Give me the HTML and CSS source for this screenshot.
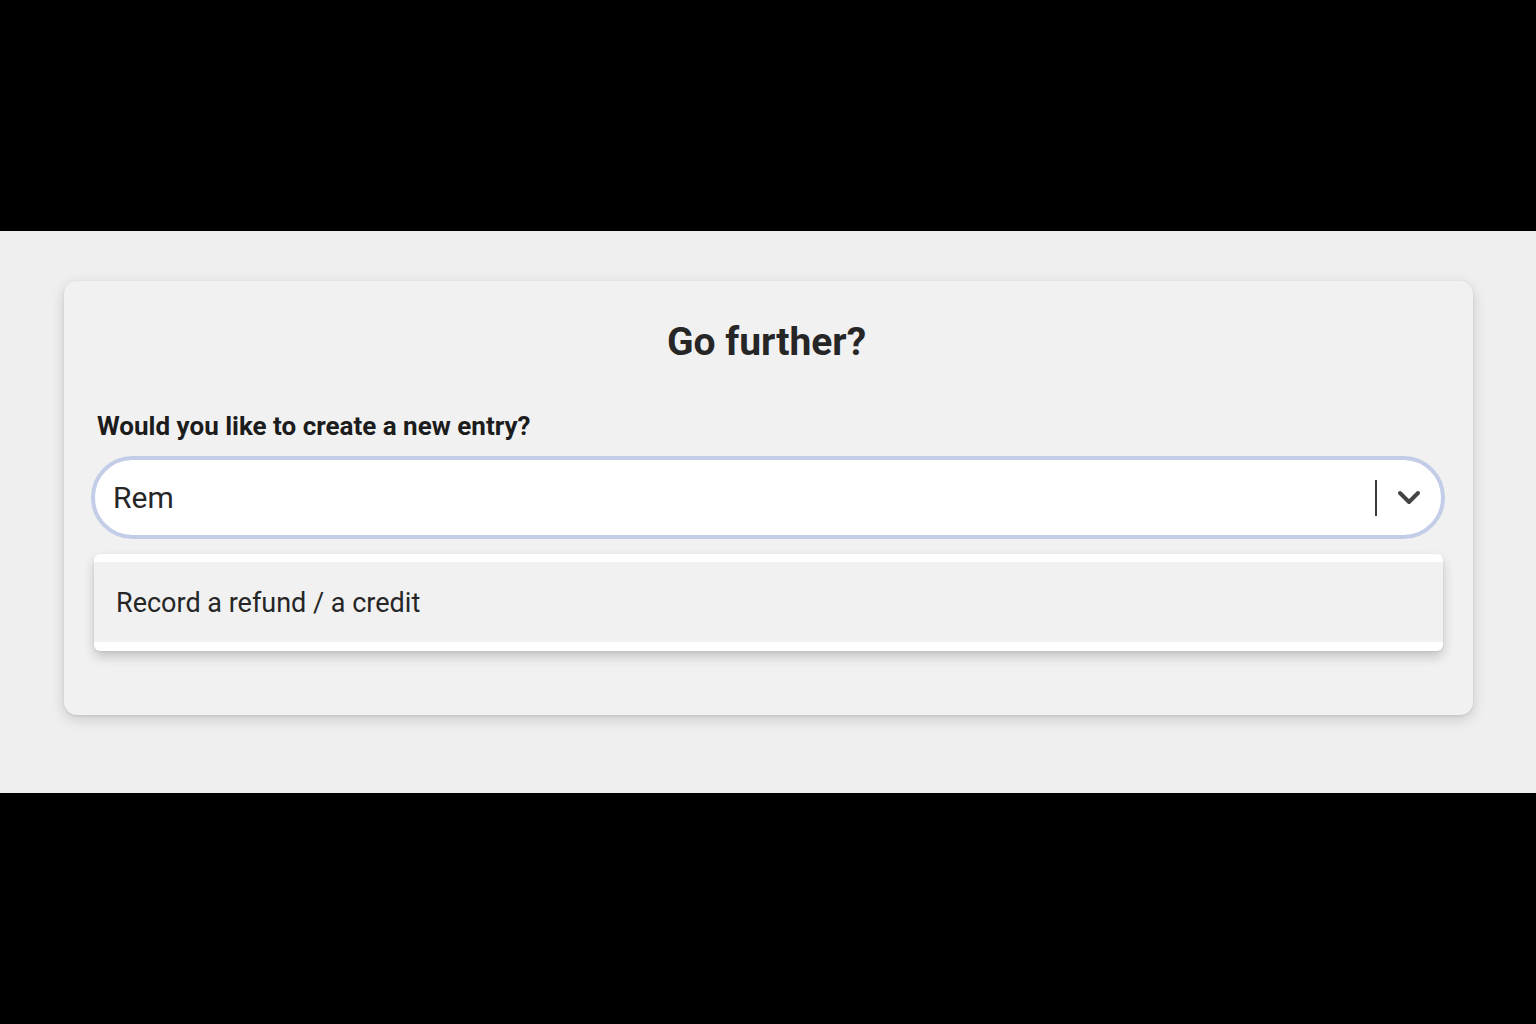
FILE: index.html
```html
<!DOCTYPE html>
<html lang="en">
<head>
<meta charset="utf-8">
<title>Go further?</title>
<link rel="stylesheet" href="styles.css">
</head>
<body>
<div class="stage">
  <div class="bar"></div>
  <main class="area">
    <section class="card">
      <h1 class="title">Go further?</h1>
      <label class="label" for="entry">Would you like to create a new entry?</label>
      <div class="select">
        <input id="entry" class="select-input" type="text" value="Rem">
        <span class="sep"></span>
        <svg class="chev" width="24" height="16" viewBox="0 0 24 16" aria-hidden="true"><path d="M3 3 L12 12 L21 3" fill="none" stroke="#444" stroke-width="4" stroke-linecap="round" stroke-linejoin="round"/></svg>
      </div>
      <ul class="menu">
        <li class="option">Record a refund / a credit</li>
      </ul>
    </section>
  </main>
  <div class="bar bar-bottom"></div>
</div>
</body>
</html>
```
FILE: styles.css
```css
html, body {
  margin: 0;
  padding: 0;
  background: #000;
}
body {
  font-family: Roboto, "Liberation Sans", sans-serif;
}
.stage {
  width: 1536px;
  height: 1024px;
  display: flex;
  flex-direction: column;
}
.bar {
  height: 231px;
  background: #000;
}
.bar-bottom {
  flex: 1;
}
.area {
  height: 562px;
  background: #efefef;
  padding: 50px 63px 0 64px;
  box-sizing: border-box;
}
.card {
  height: 434px;
  box-sizing: border-box;
  background: #f1f1f1;
  border-radius: 13px;
  box-shadow: 0 4px 14px rgba(0,0,0,0.16), 0 1px 3px rgba(0,0,0,0.08);
  padding: 38px 28px 0 27px;
  display: flex;
  flex-direction: column;
}
.title {
  margin: 0;
  padding-right: 3px;
  text-align: center;
  font-size: 39px;
  line-height: 46px;
  font-weight: 700;
  color: #262626;
}
.label {
  margin: 46px 0 0 6px;
  font-size: 26px;
  line-height: 30px;
  font-weight: 700;
  color: #1c1c1c;
}
.select {
  margin-top: 15px;
  height: 83px;
  box-sizing: border-box;
  border: 4px solid #c3cde8;
  border-radius: 42px;
  background: #fff;
  display: flex;
  align-items: center;
  padding: 0 20px 0 18px;
}
.select-input {
  flex: 1;
  border: none;
  outline: none;
  background: transparent;
  font-family: Roboto, "Liberation Sans", sans-serif;
  font-size: 30px;
  color: #262626;
  padding: 0;
}
.sep {
  width: 2px;
  height: 36px;
  background: #3a3a3a;
  margin-right: 20px;
}
.chev {
  display: block;
}
.menu {
  list-style: none;
  margin: 15px 2px 0 3px;
  padding: 8px 0 9px 0;
  background: #fff;
  border-radius: 6px;
  box-shadow: 0 6px 12px rgba(0,0,0,0.18), 0 1px 3px rgba(0,0,0,0.08);
}
.option {
  background: #f1f1f1;
  height: 80px;
  display: flex;
  align-items: center;
  padding-left: 22px;
  padding-top: 2px;
  box-sizing: border-box;
  font-size: 27px;
  color: #262626;
}
```
